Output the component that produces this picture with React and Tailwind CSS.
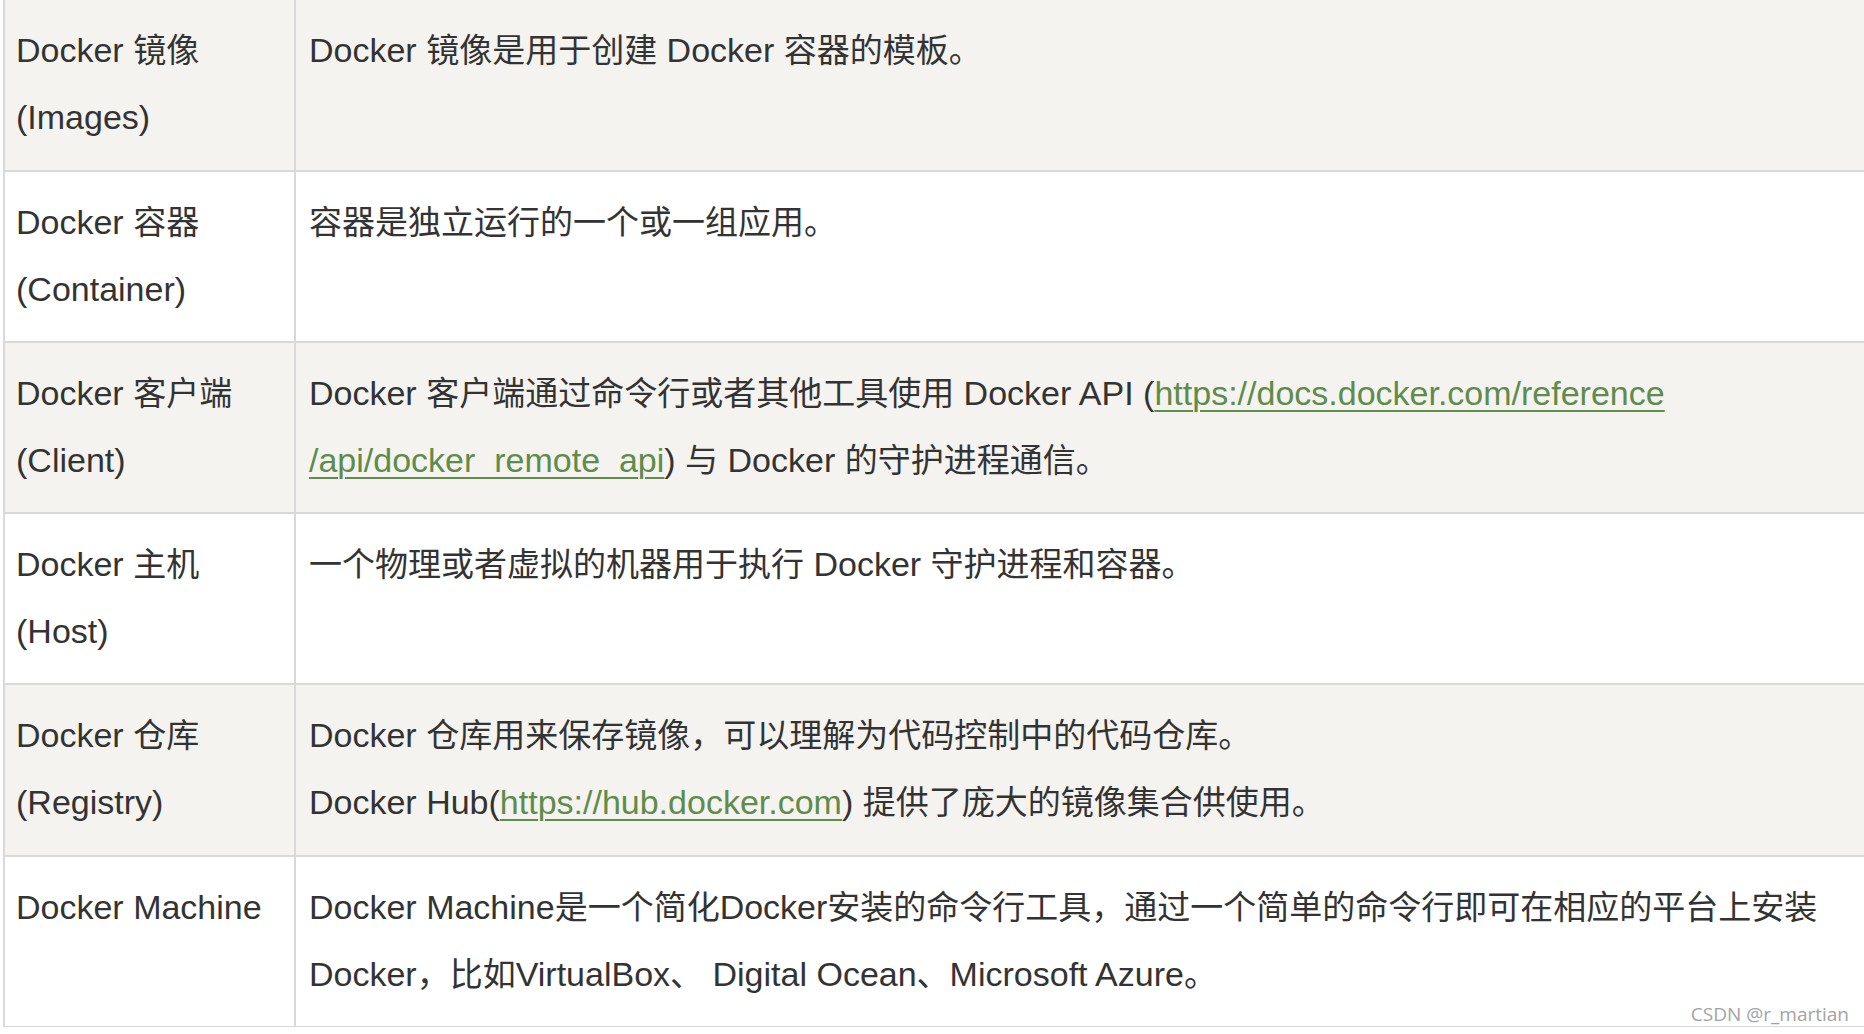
import React from "react";

const rows = [
  {
    name: ["Docker 镜像", "(Images)"],
    desc: [["Docker 镜像是用于创建 Docker 容器的模板。"]],
  },
  {
    name: ["Docker 容器", "(Container)"],
    desc: [["容器是独立运行的一个或一组应用。"]],
  },
  {
    name: ["Docker 客户端", "(Client)"],
    desc: [
      [
        "Docker 客户端通过命令行或者其他工具使用 Docker API (",
        { link: "https://docs.docker.com/reference" },
      ],
      [{ link: "/api/docker_remote_api" }, ") 与 Docker 的守护进程通信。"],
    ],
  },
  {
    name: ["Docker 主机", "(Host)"],
    desc: [["一个物理或者虚拟的机器用于执行 Docker 守护进程和容器。"]],
  },
  {
    name: ["Docker 仓库", "(Registry)"],
    desc: [
      ["Docker 仓库用来保存镜像，可以理解为代码控制中的代码仓库。"],
      ["Docker Hub(", { link: "https://hub.docker.com" }, ") 提供了庞大的镜像集合供使用。"],
    ],
  },
  {
    name: ["Docker Machine"],
    desc: [
      [
        "Docker Machine是一个简化Docker安装的命令行工具，通过一个简单的命令行即可在相应的平台上安装",
      ],
      ["Docker，比如VirtualBox、 Digital Ocean、Microsoft Azure。"],
    ],
  },
];

// CJK glyphs come out a little smaller than the latin text in the original
const Mixed = ({ text }) =>
  text.split(/([\u3000-\u9fff\uff00-\uffef]+)/).map((s, i) =>
    i % 2 === 1 ? (
      <span key={i} className="text-[33px]">
        {s}
      </span>
    ) : (
      s
    )
  );

const Line = ({ parts }) => (
  <div className="whitespace-nowrap">
    {parts.map((p, i) =>
      typeof p === "string" ? (
        <Mixed key={i} text={p} />
      ) : (
        <a
          key={i}
          className="text-[#5f8c4b] underline decoration-[#5f8c4b] decoration-[1.5px] underline-offset-[5px]"
        >
          {p.link}
        </a>
      )
    )}
  </div>
);

export default function App() {
  return (
    <div
      className="relative w-[1864px] h-[1034px] overflow-hidden bg-white text-[#333333] text-[34px] leading-[67px]"
      style={{ fontFamily: '"Liberation Sans", "Noto Sans CJK SC", sans-serif' }}
    >
      <div className="ml-[3px] mt-[-1.75px] w-[1900px] h-[1028.75px] overflow-hidden border-t-2 border-[#d9d9d9]">
        {rows.map((row, i) => (
          <div
            key={i}
            className={
              "flex h-[171.25px] border-b-2 border-[#d9d9d9] " +
              (i % 2 === 0 ? "bg-[#f4f3f0]" : "bg-white")
            }
          >
            <div className="w-[291px] shrink-0 border-l-2 border-[#d9d9d9] pl-[11px] pt-[17px]">
              {row.name.map((n, j) => (
                <div key={j} className="whitespace-nowrap">
                  <Mixed text={n} />
                </div>
              ))}
            </div>
            <div className="flex-1 border-l-2 border-[#d9d9d9] pl-[13px] pt-[17px]">
              {row.desc.map((parts, j) => (
                <Line key={j} parts={parts} />
              ))}
            </div>
          </div>
        ))}
      </div>
      <div
        className="absolute right-[15px] bottom-[8px] text-[19px] leading-[24px] text-[#a3a3a3]"
        style={{ fontFamily: '"Open Sans", "Noto Sans", sans-serif' }}
      >
        CSDN @r_martian
      </div>
    </div>
  );
}
